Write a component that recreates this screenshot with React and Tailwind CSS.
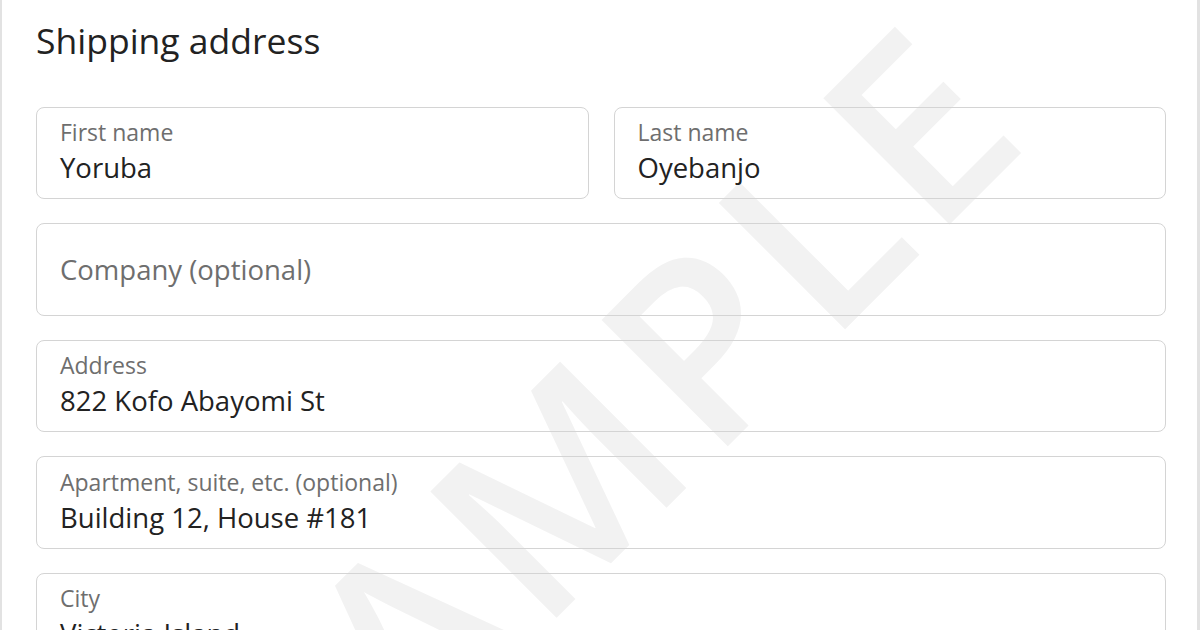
import React from "react";

const fields = [
  { label: "Address", value: "822 Kofo Abayomi St" },
  { label: "Apartment, suite, etc. (optional)", value: "Building 12, House #181" },
  { label: "City", value: "Victoria Island" },
];

function Field({ label, value, placeholder }) {
  if (placeholder) {
    return (
      <div className="h-[92.5px] rounded-lg border border-[#d4d4d4] px-[23px] flex items-center">
        <span className="text-[27.5px] leading-none text-[#6e6e6e]">{placeholder}</span>
      </div>
    );
  }
  return (
    <div className="h-[92.5px] rounded-lg border border-[#d4d4d4] px-[23px] pt-[13.5px]">
      <div className="text-[23px] leading-none text-[#6e6e6e] whitespace-nowrap">{label}</div>
      <div className="mt-[10px] text-[27.5px] leading-none text-[#222222] whitespace-nowrap">{value}</div>
    </div>
  );
}

export default function App() {
  return (
    <div
      className="relative h-[630px] w-[1200px] overflow-hidden bg-white border-l-2 border-r-[3px] border-[#e2e2e2]"
      style={{ fontFamily: '"Open Sans", "Noto Sans", sans-serif' }}
    >
      {/* watermark */}
      <div className="pointer-events-none absolute left-[604px] top-[431px]">
        <div className="-translate-x-1/2 -translate-y-1/2 -rotate-45 whitespace-nowrap text-[250px] font-semibold leading-none tracking-[12px] text-[#f2f2f2]">
          SAMPLE
        </div>
      </div>

      <div className="relative pl-[34px] pr-[31px]">
        <h1 className="pt-[23px] text-[35.5px] leading-none text-[#222222]">Shipping address</h1>

        <div className="mt-[48px] flex flex-col gap-6">
          <div className="grid grid-cols-2 gap-[25px]">
            <Field label="First name" value="Yoruba" />
            <Field label="Last name" value="Oyebanjo" />
          </div>
          <Field placeholder="Company (optional)" />
          {fields.map((f) => (
            <Field key={f.label} label={f.label} value={f.value} />
          ))}
        </div>
      </div>
    </div>
  );
}
